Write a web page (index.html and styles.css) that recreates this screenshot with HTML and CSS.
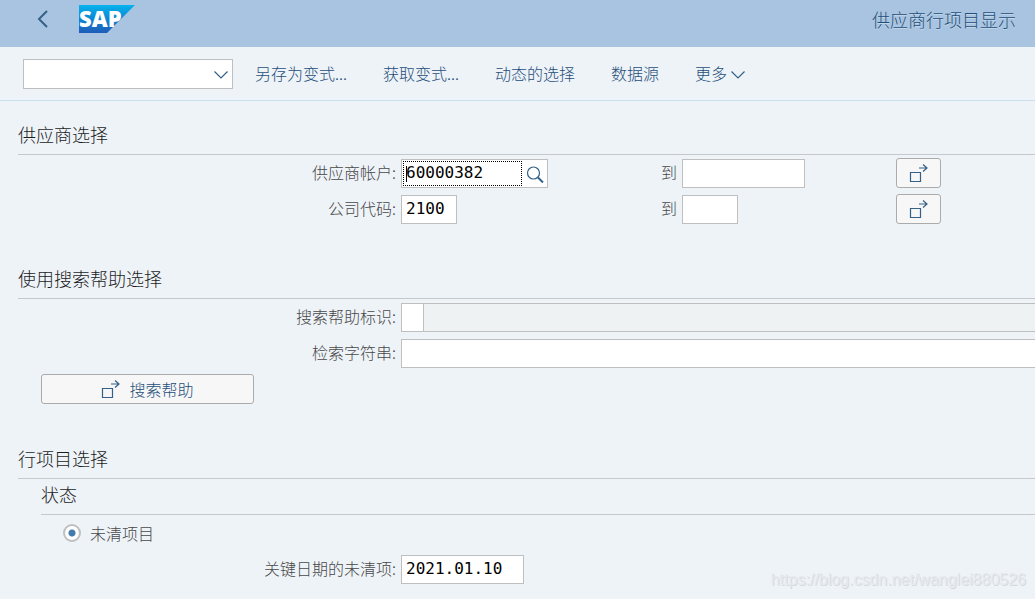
FILE: index.html
```html
<!DOCTYPE html>
<html lang="zh-CN">
<head>
<meta charset="utf-8">
<title>供应商行项目显示</title>
<link rel="stylesheet" href="styles.css">
</head>
<body>
<svg class="symbols" aria-hidden="true">
  <symbol id="icon-multi" viewBox="0 0 20 20">
    <path d="M1.500 9.500h10v9h-10zM10 5h8M14 1.500l4 3.500-4 3.500"/>
  </symbol>
  <symbol id="icon-down" viewBox="0 0 14 8">
    <path d="M.5.5l6.500 6.500 6.500-6.500"/>
  </symbol>
</svg>
<header class="shell">
  <button class="back" type="button" aria-label="返回">
    <svg class="icon" width="12" height="18" viewBox="0 0 12 18"><path d="M10 1L2 9l8 8"/></svg>
  </button>
  <svg class="logo" width="56" height="28" viewBox="0 0 56 28" role="img" aria-label="SAP">
    <defs>
      <linearGradient id="logo-fill" x1="0" y1="0" x2="0" y2="1">
        <stop offset="0" stop-color="#06b3ed"/>
        <stop offset=".5" stop-color="#0d86d2"/>
        <stop offset="1" stop-color="#1f5cb9"/>
      </linearGradient>
    </defs>
    <path fill="url(#logo-fill)" d="M0 0h56L28 28H0z"/>
    <text class="logo-text" x="0" y="22">SAP</text>
  </svg>
  <h1 class="shell-title">供应商行项目显示</h1>
</header>
<nav class="toolbar">
  <div class="command">
    <select class="command-select" aria-label="命令"><option></option></select>
    <svg class="icon command-arrow" width="14" height="8"><use href="#icon-down"/></svg>
  </div>
  <div class="actions">
    <button class="action" type="button">另存为变式...</button>
    <button class="action" type="button">获取变式...</button>
    <button class="action" type="button">动态的选择</button>
    <button class="action" type="button">数据源</button>
    <button class="action" type="button">更多<svg class="icon" width="14" height="8"><use href="#icon-down"/></svg></button>
  </div>
</nav>
<main class="content">
  <section class="section">
    <h2 class="heading">供应商选择</h2>
    <div class="row">
      <label class="label" for="vendor">供应商帐户:</label>
      <div class="lookup">
        <div class="focused"><input class="field" id="vendor" value="60000382"></div>
        <button class="search" type="button" aria-label="搜索">
          <svg class="icon" width="18" height="18" viewBox="0 0 18 18"><circle cx="7.500" cy="8" r="6"/><path class="handle" d="M12 12.500l5 5"/></svg>
        </button>
      </div>
      <label class="label" for="vendor-to">到</label>
      <input class="field medium" id="vendor-to">
      <button class="button" type="button" aria-label="多项选择"><svg class="icon" width="20" height="20"><use href="#icon-multi"/></svg></button>
    </div>
    <div class="row">
      <label class="label" for="company">公司代码:</label>
      <input class="field short" id="company" value="2100">
      <label class="label" for="company-to">到</label>
      <input class="field short" id="company-to">
      <button class="button" type="button" aria-label="多项选择"><svg class="icon" width="20" height="20"><use href="#icon-multi"/></svg></button>
    </div>
  </section>
  <section class="section">
    <h2 class="heading">使用搜索帮助选择</h2>
    <div class="row wide">
      <label class="label" for="help-id">搜索帮助标识:</label>
      <div class="pair">
        <input class="field tiny" id="help-id">
        <input class="field readonly" aria-label="搜索帮助说明" readonly>
      </div>
    </div>
    <div class="row wide">
      <label class="label" for="string">检索字符串:</label>
      <input class="field bleed" id="string">
    </div>
    <div class="button-row">
      <button class="button help" type="button"><svg class="icon" width="20" height="20"><use href="#icon-multi"/></svg>搜索帮助</button>
    </div>
  </section>
  <section class="section">
    <h2 class="heading">行项目选择</h2>
    <h3 class="heading sub">状态</h3>
    <div class="radio-row">
      <input class="radio" type="radio" id="open-items" name="status" checked>
      <label class="label" for="open-items">未清项目</label>
    </div>
    <div class="row">
      <label class="label" for="key-date">关键日期的未清项:</label>
      <input class="field medium" id="key-date" value="2021.01.10">
    </div>
  </section>
</main>
<div class="watermark">https://blog.csdn.net/wanglei880526</div>
</body>
</html>
```
FILE: styles.css
```css
* {
  box-sizing: border-box;
}

body {
  margin: 0;
  min-height: 100vh;
  position: relative;
  overflow-x: hidden;
  background: #eef3f8;
  color: #484848;
  font: 300 16px/24px "Noto Sans CJK SC", sans-serif;
}

button,
input,
select {
  margin: 0;
  font: inherit;
}

.symbols {
  display: none;
}

.icon {
  flex: none;
  fill: none;
  stroke: #346187;
  stroke-width: 1.2;
}

.shell {
  display: flex;
  align-items: center;
  height: 47px;
  padding: 0 19px 9px 31px;
  background: #a9c4e0;
}

.back {
  display: flex;
  align-items: center;
  justify-content: center;
  width: 24px;
  height: 24px;
  padding: 0;
  border: 0;
  background: none;
}

.back .icon {
  stroke-width: 2;
}

.logo {
  margin-left: 24px;
  overflow: visible;
}

.logo-text {
  fill: #fff;
  font: 800 22px "Open Sans", sans-serif;
}

.shell-title {
  margin: 0 0 0 auto;
  color: #1f4f7a;
  font-size: 18px;
  font-weight: 300;
  text-shadow: 0 1px 0 #c4d7ea;
}

.toolbar {
  display: flex;
  align-items: center;
  gap: 22px;
  height: 54px;
  padding-left: 23px;
  border-bottom: 1px solid #c8dff0;
}

.command {
  position: relative;
  width: 210px;
}

.command-select {
  display: block;
  width: 100%;
  height: 30px;
  border: 1px solid #bfbfbf;
  border-radius: 0;
  background: #fff;
  appearance: none;
}

.command-arrow {
  position: absolute;
  top: 12px;
  right: 5px;
  pointer-events: none;
}

.actions {
  display: flex;
  gap: 36px;
  padding-bottom: 1px;
}

.action {
  display: flex;
  align-items: center;
  gap: 4px;
  padding: 0;
  border: 0;
  background: none;
  color: #1f4f7a;
}

.action .icon {
  margin-top: 4px;
}

.content {
  display: grid;
  gap: 36px;
  padding: 18px 0 12px 18px;
}

.heading {
  height: 36px;
  margin: 0;
  padding-top: 3px;
  border-bottom: 1px solid #c5c8cc;
  color: #1c1c1c;
  font-size: 18px;
  font-weight: 300;
}

.sub {
  margin-left: 23px;
}

.row {
  display: grid;
  grid-template-columns: 378px 190px 81px 209px 45px;
  align-items: center;
  gap: 5px;
  height: 36px;
}

.wide {
  grid-template-columns: 378px 1fr;
}

.row > .label {
  padding-bottom: 2px;
  text-align: right;
}

.field {
  width: 100%;
  height: 29px;
  padding: 0 4px 2px;
  border: 1px solid #bfbfbf;
  border-radius: 0;
  outline: 0;
  background: #fff;
  color: #000;
  font: 16px "DejaVu Sans Mono", monospace;
}

.medium {
  width: 123px;
}

.short {
  width: 56px;
}

.tiny {
  flex: none;
  width: 23px;
}

.pair,
.lookup {
  display: flex;
}

.readonly,
.bleed {
  border-right: 0;
}

.readonly {
  background: #eff2f3;
}

.pair .readonly {
  border-left: 0;
}

.lookup {
  width: 147px;
  height: 29px;
  border: 1px solid #bfbfbf;
  background: #fff;
}

.focused {
  flex: 1;
  margin: 1px 0 1px 1px;
  padding-left: 2px;
  border: 1px dotted #000;
}

.focused .field {
  display: block;
  height: 23px;
  padding: 0 0 1px;
  border: 0;
  background: linear-gradient(#000, #000) 0 4px / 1px 16px no-repeat;
}

.search {
  display: flex;
  align-items: center;
  justify-content: center;
  width: 25px;
  padding: 2px 0 0;
  border: 0;
  background: #fff;
}

.handle {
  stroke-width: 2;
}

.button {
  display: flex;
  align-items: center;
  justify-content: center;
  gap: 8px;
  height: 30px;
  padding: 0;
  border: 1px solid #ababab;
  border-radius: 3px;
  background: #f7f7f7;
  color: #1f4f7a;
}

.help {
  width: 213px;
}

.button-row,
.radio-row {
  display: flex;
  align-items: center;
  height: 36px;
  padding-left: 23px;
}

.radio-row {
  gap: 9px;
  padding-left: 45px;
}

.radio {
  width: 18px;
  height: 18px;
  border: 2px solid #bfbfbf;
  border-radius: 50%;
  background: radial-gradient(circle, #427cac 3px, #fff 4px);
  appearance: none;
}

.watermark {
  position: absolute;
  right: 9px;
  bottom: 7px;
  color: #e6eaee;
  font: 16px/24px "Liberation Sans", sans-serif;
  text-shadow: 1px 1px 0 #d6dade;
}
```
